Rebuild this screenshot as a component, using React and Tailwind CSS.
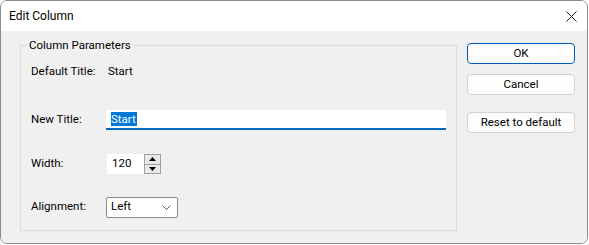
import React from "react";

const font = { fontFamily: '"Segoe UI", Roboto, "Noto Sans", sans-serif' };

const Row = ({ label, className = "", children }) => (
  <div className={`flex items-center h-[20px] ${className}`}>
    <div className="w-[75px] shrink-0">{label}</div>
    {children}
  </div>
);

const Button = ({ children, primary, className = "" }) => (
  <button
    className={`w-[108px] h-[21px] rounded-[4px] bg-[#fdfdfd] text-[11.5px] text-black leading-none ${
      primary ? "border border-[#005fb8]" : "border border-[#d0d0d0]"
    } ${className}`}
  >
    {children}
  </button>
);

export default function App() {
  return (
    <div className="w-[589px] h-[245px] bg-white">
      <div
        className="w-[588px] h-[244px] flex flex-col border border-[#8c8c8c] rounded-[7px] overflow-hidden text-[11.5px] text-black"
        style={font}
      >
        {/* title bar */}
        <div className="h-[30px] shrink-0 bg-white flex items-center justify-between pl-[8px] pr-[9px]">
          <span className="text-[12px]">Edit Column</span>
          <svg width="11" height="11" viewBox="0 0 11 11" className="mr-[1px]">
            <path d="M0.5 0.5 L10.5 10.5 M10.5 0.5 L0.5 10.5" stroke="#1a1a1a" strokeWidth="1" />
          </svg>
        </div>

        {/* body */}
        <div className="flex-1 bg-[#f0f0f0] flex pl-[19px] pt-[6px]">
          <fieldset className="w-[437px] h-[194px] border border-[#dcdcdc] pl-[10px]">
            <legend className="-ml-[4px] px-[2px] leading-[16px]">Column Parameters</legend>
            <Row label="Default Title:" className="mt-[9px]">
              <span className="ml-[2px]">Start</span>
            </Row>
            <Row label="New Title:" className="mt-[28px]">
              <div className="w-[340px] h-[20px] bg-white border-b-2 border-[#0067c0] flex items-center pl-[5px]">
                <span className="bg-[#0078d7] text-white leading-[14px] pr-[1px]">Start</span>
              </div>
            </Row>
            <Row label="Width:" className="mt-[24px]">
              <div className="ml-[1px] w-[54px] h-[20px] flex bg-white">
                <div className="flex-1 flex items-center pl-[5px]">120</div>
                <div className="w-[17px] h-[20px] flex flex-col border border-[#a0a0a0] bg-[#e9e9e9]">
                  <div className="flex-1 flex items-center justify-center border-b border-[#a0a0a0]">
                    <svg width="7" height="4" viewBox="0 0 7 4">
                      <path d="M0 4 L3.5 0 L7 4 Z" fill="#000" />
                    </svg>
                  </div>
                  <div className="flex-1 flex items-center justify-center">
                    <svg width="7" height="4" viewBox="0 0 7 4">
                      <path d="M0 0 L3.5 4 L7 0 Z" fill="#000" />
                    </svg>
                  </div>
                </div>
              </div>
            </Row>
            <Row label="Alignment:" className="mt-[23px]">
              <div className="w-[72px] h-[21px] bg-white border border-[#8a8a8a] rounded-[2px] flex items-center justify-between pl-[4px] pr-[6px]">
                <span>Left</span>
                <svg width="9" height="5" viewBox="0 0 9 5">
                  <path d="M0.5 0.5 L4.5 4.5 L8.5 0.5" stroke="#555" strokeWidth="1" fill="none" />
                </svg>
              </div>
            </Row>
          </fieldset>

          <div className="ml-[10px] pt-[6px] flex flex-col">
            <Button primary>OK</Button>
            <Button className="mt-[10px]">Cancel</Button>
            <Button className="mt-[17px]">Reset to default</Button>
          </div>
        </div>
      </div>
    </div>
  );
}
